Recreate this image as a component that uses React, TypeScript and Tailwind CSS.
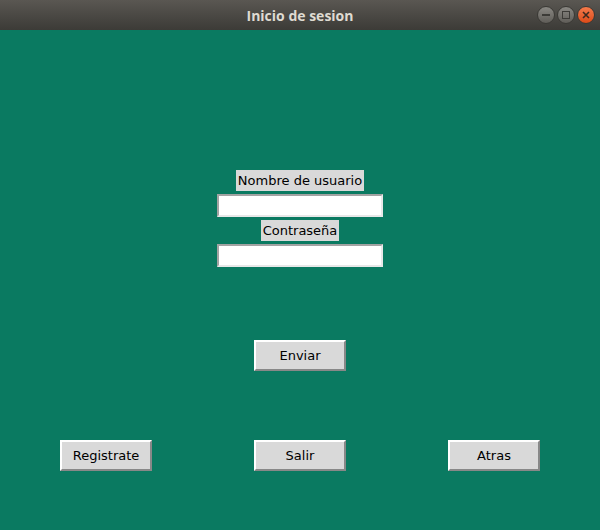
import React from 'react';

const font = { fontFamily: '"DejaVu Sans", sans-serif' };

function TkButton({ label }: { label: string }) {
  return (
    <button
      className="w-[92px] h-[31px] bg-[#d9d9d9] text-[13px] text-black border-t-2 border-l-2 border-b-2 border-r-2 border-t-white border-l-white border-b-[#888888] border-r-[#888888] flex items-center justify-center"
      style={font}
    >
      {label}
    </button>
  );
}

function TkEntry() {
  return (
    <div className="w-[166px] h-[23px] bg-white border-2 border-t-[#a3a3a3] border-l-[#a3a3a3] border-b-[#e8e8e8] border-r-[#e8e8e8]" />
  );
}

function TkLabel({ text }: { text: string }) {
  return (
    <div className="h-[21px] px-[2px] bg-[#d9d9d9] text-[13px] text-black flex items-center" style={font}>
      {text}
    </div>
  );
}

function TitleBar() {
  return (
    <div className="relative h-[30px] bg-gradient-to-b from-[#5a5752] to-[#3c3b37] flex items-center justify-center">
      <span
        className="text-[14px] font-bold text-[#dfdbd2]"
        style={{ fontFamily: '"Open Sans", "DejaVu Sans", sans-serif' }}
      >
        Inicio de sesion
      </span>
      <div className="absolute right-[5px] top-[6px] flex gap-[2px]">
        <div className="w-[18px] h-[18px] rounded-full bg-gradient-to-b from-[#8a8883] to-[#5f5d58] border border-[#3a3935] flex items-center justify-center">
          <div className="w-[8px] h-[2px] bg-[#3c3b37]" />
        </div>
        <div className="w-[18px] h-[18px] rounded-full bg-gradient-to-b from-[#8a8883] to-[#5f5d58] border border-[#3a3935] flex items-center justify-center">
          <div className="w-[8px] h-[8px] border-[1.5px] border-[#3c3b37]" />
        </div>
        <div className="w-[18px] h-[18px] rounded-full bg-gradient-to-b from-[#f47a4a] to-[#dc4a16] border border-[#3a3935] flex items-center justify-center">
          <svg width="8" height="8" viewBox="0 0 8 8">
            <path d="M1 1 L7 7 M7 1 L1 7" stroke="#3c2a20" strokeWidth="1.6" />
          </svg>
        </div>
      </div>
    </div>
  );
}

export default function App() {
  return (
    <div className="w-[600px] h-[530px] flex flex-col bg-[#0a7a61]">
      <TitleBar />
      <div className="flex-1 flex flex-col items-center pt-[140px]">
        <TkLabel text="Nombre de usuario" />
        <div className="mt-[3px]">
          <TkEntry />
        </div>
        <div className="mt-[3px]">
          <TkLabel text="Contraseña" />
        </div>
        <div className="mt-[3px]">
          <TkEntry />
        </div>
        <div className="mt-[73px]">
          <TkButton label="Enviar" />
        </div>
        <div className="mt-[69px] w-full px-[9px] grid grid-cols-3 justify-items-center">
          <TkButton label="Registrate" />
          <TkButton label="Salir" />
          <TkButton label="Atras" />
        </div>
      </div>
    </div>
  );
}
